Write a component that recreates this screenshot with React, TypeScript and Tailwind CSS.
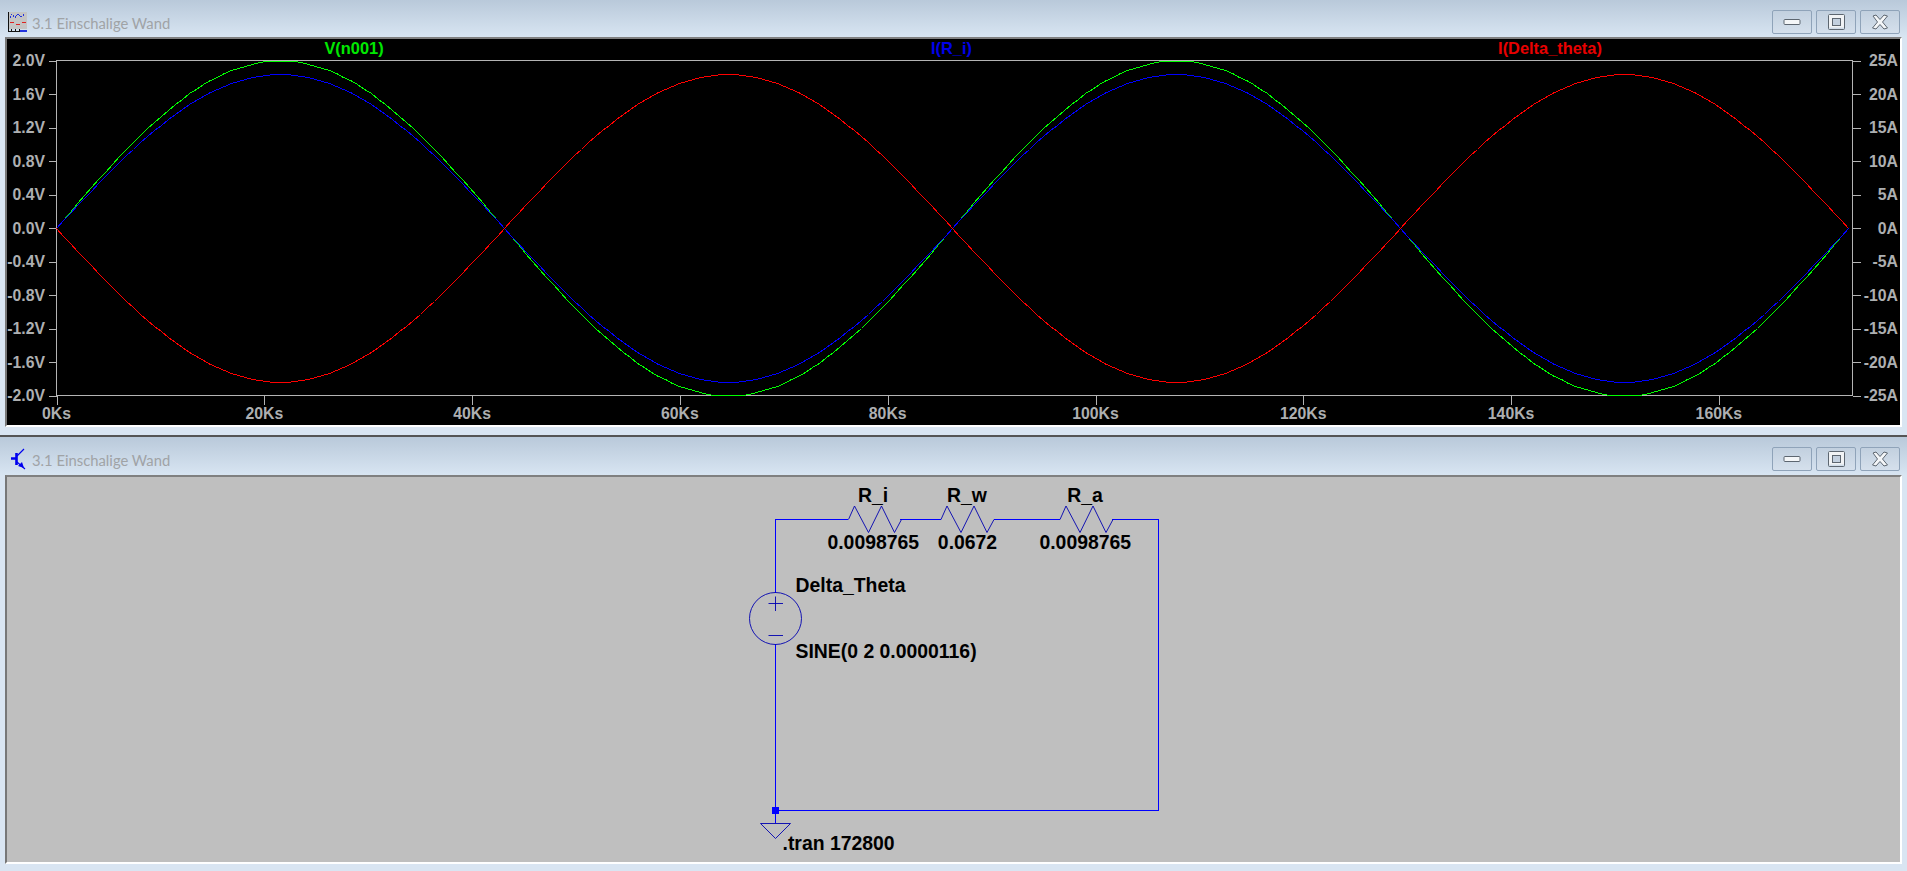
const FONT = "font-['Liberation_Sans',Arial,sans-serif]"

// axis helpers, all numbers are page pixels
const LEFT = 56.5
const RIGHT = 1852.5
const TOP = 60.5
const BOTTOM = 395.5
const MID = (TOP + BOTTOM) / 2
const HALF = (BOTTOM - TOP) / 2
const FREQ = 0.0000116
const END = 172800

function wave(amp: number, sign: number) {
  const pts: string[] = []
  for (let px = 0; px <= RIGHT - LEFT; px += 7) {
    const t = (px / (RIGHT - LEFT)) * END
    const y = MID - sign * amp * Math.sin(2 * Math.PI * FREQ * t)
    pts.push(`${LEFT + px},${Math.round(y) + 0.5}`)
  }
  return pts.join(' ')
}

const leftTicks = ['2.0V', '1.6V', '1.2V', '0.8V', '0.4V', '0.0V', '-0.4V', '-0.8V', '-1.2V', '-1.6V', '-2.0V']
const rightTicks = ['25A', '20A', '15A', '10A', '5A', '0A', '-5A', '-10A', '-15A', '-20A', '-25A']
const bottomTicks = ['0Ks', '20Ks', '40Ks', '60Ks', '80Ks', '100Ks', '120Ks', '140Ks', '160Ks']

function PlotIcon() {
  return (
    <svg width="21" height="21" viewBox="0 0 21 21" shapeRendering="crispEdges">
      <rect x="1" y="0" width="19" height="17" fill="#c4c4c4" />
      <path d="M3 6L5 2L8 6L11 2L14 5L18 2" fill="none" stroke="#2233dd" strokeDasharray="2 1" />
      <path d="M3 10h4M9 12h4M15 10h4" stroke="#dd2222" />
      <path d="M1.5 0v19M1 19.5h19M4 17v2M8 17v2M12 17v2" stroke="#111" />
      <path d="M13 18.5h7" stroke="#2233dd" strokeWidth="2" />
    </svg>
  )
}

function SchematicIcon() {
  return (
    <svg width="16" height="22" viewBox="0 0 16 22">
      <path d="M1 10.5h5M6.5 5v12" stroke="#0000ee" strokeWidth="2.6" fill="none" />
      <path d="M7 8L14 1M7 14L15 21" stroke="#0000ee" strokeWidth="1.2" fill="none" />
      <path d="M14 20L8 18L12 14Z" fill="#0000ee" />
    </svg>
  )
}

function MinimizeGlyph() {
  return (
    <svg width="18" height="8" viewBox="0 0 18 8">
      <rect x="1" y="1.5" width="16" height="5" rx="1" fill="#f4f6f8" stroke="#5d6670" />
    </svg>
  )
}

function MaximizeGlyph() {
  return (
    <svg width="17" height="16" viewBox="0 0 17 16">
      <rect x="2.5" y="2.5" width="12" height="9" fill="none" stroke="#f1f3f5" strokeWidth="4" />
      <rect x="0.5" y="0.5" width="16" height="15" rx="1" fill="none" stroke="#5d6670" />
      <rect x="4.5" y="4.5" width="8" height="7" fill="#c3d0df" stroke="#5d6670" />
    </svg>
  )
}

function CloseGlyph() {
  return (
    <svg width="18" height="16" viewBox="0 0 18 16">
      <path d="M2 2L5 1L9 5.5L13 1L16.5 2L11.5 8L16.5 14L13 15L9 10.5L5 15L1.5 14L6.5 8Z" fill="#f4f6f8" stroke="#5d6670" strokeLinejoin="round" />
    </svg>
  )
}

function WinButton({ children }: { children: React.ReactNode }) {
  return (
    <div className="flex items-center justify-center w-[40px] h-[24px] rounded-[2px] border border-[#8fa3b9] bg-gradient-to-b from-[#c2d0df] to-[#d5e0ec]">
      {children}
    </div>
  )
}

function TitleBar({ icon, height }: { icon: React.ReactNode; height: string }) {
  return (
    <div className={`pt-[10px] px-[7px] bg-gradient-to-b from-[#b9c9da] to-[#d8e5f2] ${height}`}>
      <div className="flex items-center h-[24px]">
        <div className="w-[21px] flex justify-center">{icon}</div>
        <span className="ml-[4px] mt-[2px] text-[#a0a3a6] text-[14.8px] font-['Lato',sans-serif]">
          3.1 Einschalige Wand
        </span>
        <div className="ml-auto flex gap-[4px]">
          <WinButton>
            <MinimizeGlyph />
          </WinButton>
          <WinButton>
            <MaximizeGlyph />
          </WinButton>
          <WinButton>
            <CloseGlyph />
          </WinButton>
        </div>
      </div>
    </div>
  )
}

function Plot() {
  const labelCls = 'text-[15.8px] font-bold fill-[#adafb1]'
  const step = (BOTTOM - TOP) / 10
  const xStep = 207.8
  return (
    <svg className={`block ${FONT}`} width="1893" height="386" viewBox="7 39 1893 386">
      <rect x="7" y="39" width="1893" height="386" fill="#000" />
      <g shapeRendering="crispEdges" stroke="#b4b4b4" fill="none">
        <path d={`M${LEFT} ${TOP}H${RIGHT}V${BOTTOM}H${LEFT}Z`} />
        {leftTicks.map((_, i) => (
          <path key={i} d={`M${LEFT - 8} ${Math.round(TOP + i * step) + 0.5}H${LEFT}`} />
        ))}
        {rightTicks.map((_, i) => (
          <path key={i} d={`M${RIGHT} ${Math.round(TOP + i * step) + 0.5}H${RIGHT + 8}`} />
        ))}
        {bottomTicks.map((_, i) => (
          <path key={i} d={`M${Math.round(LEFT + i * xStep) + 0.5} ${BOTTOM}V${BOTTOM + 9}`} />
        ))}
      </g>
      {leftTicks.map((t, i) => (
        <text key={t} x="45" y={TOP + i * step + 5.5} textAnchor="end" className={labelCls}>
          {t}
        </text>
      ))}
      {rightTicks.map((t, i) => (
        <text key={t} x="1898" y={TOP + i * step + 5.5} textAnchor="end" className={labelCls}>
          {t}
        </text>
      ))}
      {bottomTicks.map((t, i) => (
        <text key={t} x={LEFT + i * xStep} y="419" textAnchor="middle" className={labelCls}>
          {t}
        </text>
      ))}
      <text x="354" y="53.5" textAnchor="middle" className="text-[16.4px] font-bold fill-[#00e800]">V(n001)</text>
      <text x="951.5" y="53.5" textAnchor="middle" className="text-[16.4px] font-bold fill-[#0000e8]">I(R_i)</text>
      <text x="1550" y="53.5" textAnchor="middle" className="text-[16.4px] font-bold fill-[#e80000]">I(Delta_theta)</text>
      <g fill="none" shapeRendering="crispEdges">
        <polyline points={wave(HALF, 1)} stroke="#00ff00" strokeWidth="1" />
        <polyline points={wave(HALF * 0.92, 1)} stroke="#0000ff" strokeWidth="1" />
        <polyline points={wave(HALF * 0.92, -1)} stroke="#ff0000" strokeWidth="1" />
      </g>
    </svg>
  )
}

function Resistor({ from }: { from: number }) {
  // zigzag of one resistor, from = left end on the top wire
  const pts = [0, 6, 20, 33, 46, 53]
  const ys = [519.5, 506, 532.5, 506, 532.5, 519.5]
  return (
    <polyline
      points={pts.map((p, i) => `${from + p},${ys[i]}`).join(' ')}
      fill="none"
      stroke="#0000b0"
      strokeWidth="0.9"
    />
  )
}

function Schematic() {
  const cls = 'text-[19.4px] font-bold fill-black'
  return (
    <svg className={`block ${FONT}`} width="1893" height="385" viewBox="7 477 1893 385">
      <rect x="7" y="477" width="1893" height="385" fill="#bfbfbf" />
      <g shapeRendering="crispEdges" stroke="#0000ff" fill="none">
        <path d="M848 519.5H775.5V592.5M900 519.5H941M994 519.5H1060M1112 519.5H1158.5V810.5H775.5M775.5 644V823" />
      </g>
      <Resistor from={848.5} />
      <Resistor from={941} />
      <Resistor from={1060} />
      <g fill="none" stroke="#0000b0" strokeWidth="0.9">
        <circle cx="775.5" cy="618.5" r="26" />
        <path d="M768.5 603.5H783M775.5 596.5V611M768.5 635.5H783" />
        <path d="M760.5 823.5H790.5L775.5 838.5Z" />
      </g>
      <rect x="772" y="807" width="7" height="7" fill="#0000ff" />
      <text x="873" y="502" textAnchor="middle" className={cls}>R_i</text>
      <text x="967" y="502" textAnchor="middle" className={cls}>R_w</text>
      <text x="1085" y="502" textAnchor="middle" className={cls}>R_a</text>
      <text x="873.3" y="549" textAnchor="middle" className={cls}>0.0098765</text>
      <text x="967.5" y="549" textAnchor="middle" className={cls}>0.0672</text>
      <text x="1085.3" y="549" textAnchor="middle" className={cls}>0.0098765</text>
      <text x="795.5" y="591.5" className={cls}>Delta_Theta</text>
      <text x="795.5" y="657.5" className={cls}>SINE(0 2 0.0000116)</text>
      <text x="782.5" y="849.5" className={cls}>.tran 172800</text>
    </svg>
  )
}

export default function App() {
  return (
    <div className="w-[1907px] h-[871px] overflow-hidden flex flex-col bg-[#d9e5f2]">
      <TitleBar icon={<PlotIcon />} height="h-[37px]" />
      <div className="ml-[5px] mr-[5px] border-2 border-t-[#808080] border-l-[#777] border-r-white border-b-white">
        <Plot />
      </div>
      <div className="mt-[8px] h-[2px] bg-[#555]" />
      <TitleBar icon={<SchematicIcon />} height="h-[38px]" />
      <div className="ml-[5px] mr-[5px] border-2 border-t-[#808080] border-l-[#777] border-r-white border-b-white">
        <Schematic />
      </div>
    </div>
  )
}
